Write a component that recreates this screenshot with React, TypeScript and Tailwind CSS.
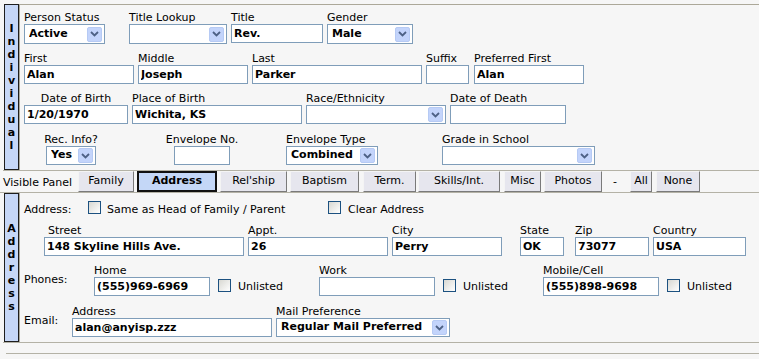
import React from "react";

const FONT = "font-['DejaVu_Sans',Verdana,sans-serif]";

function Sidebar({ text }: { text: string }) {
  return (
    <div className="ml-[1px] flex w-[15px] shrink-0 flex-col items-center justify-center border border-[#1e1e1e] bg-[#c6d7f7] text-[11px] font-bold leading-[13px]">
      {text.split("").map((c, i) => (
        <span key={i}>{c}</span>
      ))}
    </div>
  );
}

function Arrow() {
  return (
    <span className="flex h-[15px] w-[15px] shrink-0 items-center justify-center rounded-[2px] border border-[#b6caf4] bg-[#c3d4fb]">
      <svg width="9" height="6" viewBox="0 0 9 6">
        <path d="M1 1l3.5 3.5L8 1" stroke="#4d6185" strokeWidth="1.8" fill="none" />
      </svg>
    </span>
  );
}

function TextBox({ value = "", w }: { value?: string; w: string }) {
  return (
    <input
      readOnly
      value={value}
      className={`${w} h-[19px] border border-[#7f9db9] bg-white px-[2px] text-[11px] font-bold text-black outline-none`}
    />
  );
}

function SelectBox({ value = "", w, h = "h-[20px]" }: { value?: string; w: string; h?: string }) {
  return (
    <div className={`${w} ${h} flex items-center border border-[#7f9db9] bg-white pl-[4px] pr-[2px] text-[11px] font-bold`}>
      <span className="flex-1 truncate">{value}</span>
      <Arrow />
    </div>
  );
}

function Field({
  label,
  className = "",
  labelClass = "",
  lh = "h-[14px] leading-[15px]",
  children,
}: {
  label: string;
  className?: string;
  labelClass?: string;
  lh?: string;
  children: React.ReactNode;
}) {
  return (
    <div className={`flex shrink-0 flex-col ${className}`}>
      <div className={`${lh} whitespace-nowrap ${labelClass}`}>{label}</div>
      {children}
    </div>
  );
}

function Check() {
  return (
    <span className="block h-[13px] w-[13px] shrink-0 border border-[#1c5180] bg-linear-to-br from-[#d8d8d2] to-white" />
  );
}

function TabButton({ label, w, ml, active }: { label: string; w: string; ml: string; active?: boolean }) {
  return (
    <button
      type="button"
      className={`${w} ${ml} flex h-[21px] shrink-0 items-center justify-center text-[11px] ${
        active
          ? "border-2 border-[#111] bg-[#c4d7f7] font-bold"
          : "border border-t-[#f4f4f4] border-l-[#f4f4f4] border-r-[#7a7a7a] border-b-[#7a7a7a] bg-[#e6e6ee]"
      }`}
    >
      {label}
    </button>
  );
}

function PhoneGroup({ label, value, w }: { label: string; value?: string; w: string }) {
  return (
    <Field label={label} className={w} lh="h-[13px] leading-[13px]">
      <div className="flex items-end">
        <TextBox value={value} w="w-[116px]" />
        <div className="mb-[3px] ml-[8px] flex items-center">
          <Check />
          <span className="ml-[7px] mt-[2px] leading-[13px]">Unlisted</span>
        </div>
      </div>
    </Field>
  );
}

export default function App() {
  return (
    <div className={`${FONT} min-h-[359px] bg-[#f6f6f6] pt-[4px] text-[11px] text-black`}>
      {/* Individual */}
      <div className="ml-[3px] flex border-b border-[#b4b2a6]">
        <Sidebar text="Individual" />
        <div className="flex-1 border-t border-l border-[#aca899] pt-[5px] pb-[5px] pl-[4px]">
          <div className="flex">
            <Field label="Person Status">
              <SelectBox value="Active" w="w-[81px]" />
            </Field>
            <Field label="Title Lookup" className="ml-[24px]">
              <SelectBox w="w-[98px]" />
            </Field>
            <Field label="Title" className="ml-[4px]">
              <TextBox value="Rev." w="w-[92px]" />
            </Field>
            <Field label="Gender" className="ml-[4px]">
              <SelectBox value="Male" w="w-[86px]" />
            </Field>
          </div>

          <div className="mt-[7px] flex">
            <Field label="First">
              <TextBox value="Alan" w="w-[110px]" />
            </Field>
            <Field label="Middle" className="ml-[4px]">
              <TextBox value="Joseph" w="w-[110px]" />
            </Field>
            <Field label="Last" className="ml-[4px]">
              <TextBox value="Parker" w="w-[170px]" />
            </Field>
            <Field label="Suffix" className="ml-[4px]">
              <TextBox w="w-[43px]" />
            </Field>
            <Field label="Preferred First" className="ml-[5px]">
              <TextBox value="Alan" w="w-[110px]" />
            </Field>
          </div>

          <div className="mt-[7px] flex">
            <Field label="Date of Birth" className="items-center">
              <TextBox value="1/20/1970" w="w-[104px]" />
            </Field>
            <Field label="Place of Birth" className="ml-[4px]">
              <TextBox value="Wichita, KS" w="w-[170px]" />
            </Field>
            <Field label="Race/Ethnicity" className="ml-[4px]">
              <SelectBox w="w-[140px]" h="h-[19px]" />
            </Field>
            <Field label="Date of Death" className="ml-[4px]">
              <TextBox w="w-[116px]" />
            </Field>
          </div>

          <div className="mt-[8px] flex">
            <Field label="Rec. Info?" className="w-[94px] items-center">
              <SelectBox value="Yes" w="w-[50px]" h="h-[19px]" />
            </Field>
            <Field label="Envelope No." className="ml-[5px] w-[158px] items-center">
              <TextBox w="w-[56px]" />
            </Field>
            <Field label="Envelope Type" className="ml-[5px]">
              <SelectBox value="Combined" w="w-[92px]" h="h-[19px]" />
            </Field>
            <Field label="Grade in School" className="ml-[64px]">
              <SelectBox w="w-[153px]" h="h-[19px]" />
            </Field>
          </div>
        </div>
      </div>

      {/* Visible panel buttons */}
      <div className="flex h-[22px] items-center border-b border-[#b4b2a6] pb-[1px]">
        <span className="ml-[3px] w-[75px] pt-[5px]">Visible Panel</span>
        <TabButton label="Family" w="w-[56px]" ml="ml-0" />
        <TabButton label="Address" w="w-[80px]" ml="ml-[3px]" active />
        <TabButton label="Rel'ship" w="w-[67px]" ml="ml-[3px]" />
        <TabButton label="Baptism" w="w-[69px]" ml="ml-[3px]" />
        <TabButton label="Term." w="w-[53px]" ml="ml-[4px]" />
        <TabButton label="Skills/Int." w="w-[82px]" ml="ml-[2px]" />
        <TabButton label="Misc" w="w-[37px]" ml="ml-[4px]" />
        <TabButton label="Photos" w="w-[58px]" ml="ml-[3px]" />
        <span className="ml-[11px] w-[17px] pt-[2px]">-</span>
        <TabButton label="All" w="w-[22px]" ml="ml-0" />
        <TabButton label="None" w="w-[44px]" ml="ml-[4px]" />
      </div>

      {/* Address */}
      <div className="ml-[3px] flex border-b border-[#b4b2a6]">
        <Sidebar text="Address" />
        <div className="flex-1 border-l border-[#aca899] pt-[8px] pb-[5px] pl-[4px]">
          <div className="flex h-[13px] items-start">
            <span className="mt-[2px] w-[64px] leading-[13px]">Address:</span>
            <Check />
            <span className="mt-[2px] ml-[6px] w-[221px] leading-[13px]">Same as Head of Family / Parent</span>
            <Check />
            <span className="mt-[2px] ml-[7px] leading-[13px]">Clear Address</span>
          </div>

          <div className="mt-[10px] flex">
            <Field label="Street" className="ml-[20px]" labelClass="pl-[4px]" lh="h-[13px] leading-[13px]">
              <TextBox value="148 Skyline Hills Ave." w="w-[200px]" />
            </Field>
            <Field label="Appt." className="ml-[4px]" lh="h-[13px] leading-[13px]">
              <TextBox value="26" w="w-[140px]" />
            </Field>
            <Field label="City" className="ml-[4px]" lh="h-[13px] leading-[13px]">
              <TextBox value="Perry" w="w-[110px]" />
            </Field>
            <Field label="State" className="ml-[18px]" lh="h-[13px] leading-[13px]">
              <TextBox value="OK" w="w-[44px]" />
            </Field>
            <Field label="Zip" className="ml-[11px]" lh="h-[13px] leading-[13px]">
              <TextBox value="73077" w="w-[74px]" />
            </Field>
            <Field label="Country" className="ml-[4px]" lh="h-[13px] leading-[13px]">
              <TextBox value="USA" w="w-[93px]" />
            </Field>
          </div>

          <div className="mt-[8px] flex items-center">
            <span className="w-[70px]">Phones:</span>
            <PhoneGroup label="Home" value="(555)969-6969" w="w-[225px]" />
            <PhoneGroup label="Work" w="w-[224px]" />
            <PhoneGroup label="Mobile/Cell" value="(555)898-9698" w="w-[200px]" />
          </div>

          <div className="mt-[9px] flex items-center">
            <span className="w-[48px]">Email:</span>
            <Field label="Address" lh="h-[13px] leading-[13px]">
              <TextBox value="alan@anyisp.zzz" w="w-[200px]" />
            </Field>
            <Field label="Mail Preference" className="ml-[4px]" lh="h-[13px] leading-[14px]">
              <SelectBox value="Regular Mail Preferred" w="w-[174px]" h="h-[19px]" />
            </Field>
          </div>
        </div>
      </div>

      <div className="mt-[10px] ml-[6px] border-t border-[#b4b2a6]" />
    </div>
  );
}
